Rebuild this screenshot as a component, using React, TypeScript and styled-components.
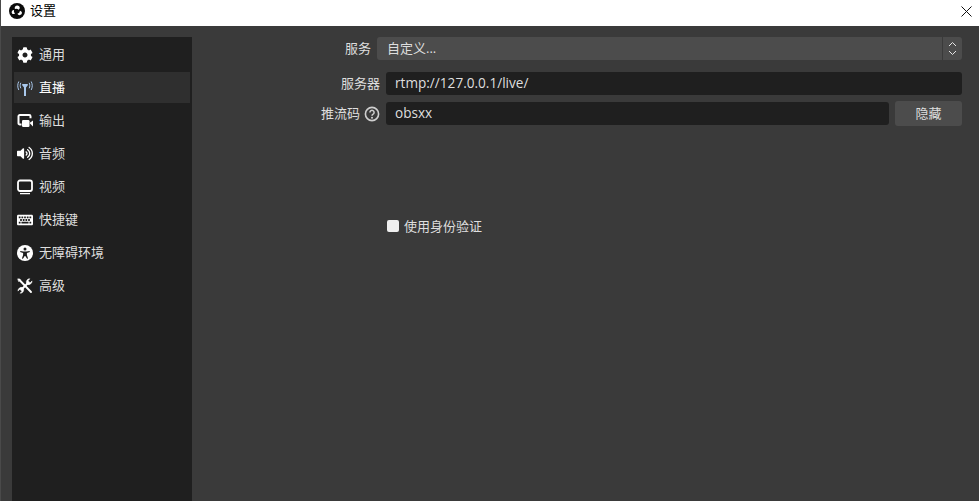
import React from 'react';
import styled, { createGlobalStyle } from 'styled-components';
import { FaCog, FaVolumeUp, FaKeyboard } from 'react-icons/fa';

const GlobalStyle = createGlobalStyle`
  html, body {
    margin: 0;
    padding: 0;
    background: #3a3a3a;
  }
  * {
    box-sizing: border-box;
  }
`;

const ObsLogo = () => (
  <svg width="16" height="16" viewBox="0 0 16 16">
    <circle cx="8" cy="8" r="8" fill="#0b0b0b" />
    <path d="M8.4 2.4a2.4 2.4 0 0 1 1.3 4.4A3.6 3.6 0 0 0 5.9 6 2.6 2.6 0 0 1 8.4 2.4z" fill="#fff" />
    <path d="M13 9.8a2.4 2.4 0 0 1-4.6.9 3.6 3.6 0 0 0 2.6-3 2.6 2.6 0 0 1 2 2.1z" fill="#fff" />
    <path d="M3.2 10.8a2.4 2.4 0 0 1 1.8-3.9 3.6 3.6 0 0 0 1 3.6 2.6 2.6 0 0 1-2.8.3z" fill="#fff" />
  </svg>
);

const StreamIcon = () => (
  <svg width="16" height="16" viewBox="0 0 16 16" fill="none" stroke="#a9c8ec">
    <path d="M5.2 4h5.600v1.200L9 7.600V16H7V7.600L5.200 5.200z" fill="#a9c8ec" stroke="none" />
    <path d="M3.800 2.800c-.8 1.800-.8 3.700 0 5.500M12.200 2.800c.8 1.800.8 3.700 0 5.500" strokeWidth="1" />
    <path d="M1.800 1.500c-1.400 2.800-1.400 5.700 0 8.500M14.200 1.500c1.400 2.800 1.400 5.700 0 8.500" strokeWidth="1" />
  </svg>
);

const OutputIcon = () => (
  <svg width="16" height="16" viewBox="0 0 16 16" fill="none">
    <path d="M4.500 11.500H2.800A1.300 1.300 0 0 1 1.500 10.200V3.300A1.300 1.300 0 0 1 2.800 2h9.400a1.300 1.300 0 0 1 1.300 1.300v2" stroke="#fff" strokeWidth="2" />
    <rect x="5" y="7" width="7.500" height="7" rx="1.200" fill="#fff" />
    <path d="M12.500 10l3.500-2.500v6z" fill="#fff" />
  </svg>
);

const MonitorIcon = () => (
  <svg width="16" height="16" viewBox="0 0 16 16" fill="none">
    <rect x="1" y="1.500" width="14" height="10.500" rx="2" stroke="#fff" strokeWidth="1.800" />
    <path d="M3 14.600h10" stroke="#fff" strokeWidth="1.300" />
  </svg>
);

const AccessIcon = () => (
  <svg width="16" height="16" viewBox="0 0 16 16">
    <circle cx="8" cy="8" r="8" fill="#fff" />
    <circle cx="8" cy="3.900" r="1.500" fill="#1f1f1f" />
    <path d="M3.400 6l3.100.6h3l3.100-.6.3 1-3 .9v2.200l1.200 3.400-1 .3L8.300 11h-.6l-1.800 2.800-1-.3 1.200-3.400V7.900l-3-.9z" fill="#1f1f1f" />
  </svg>
);

const ToolsIcon = () => (
  <svg width="16" height="16" viewBox="0 0 16 16" fill="none" stroke="#fff" strokeLinecap="round">
    <path d="M5.500 10.500L11 5" strokeWidth="2" />
    <path d="M15 3.300a3.300 3.300 0 0 1-4.500 3.100L9.600 5.400A3.300 3.300 0 0 1 12.800.8l-1.700 1.900 1.900 2z" fill="#fff" strokeWidth=".6" />
    <path d="M1 12.700a3.300 3.300 0 0 1 4.500-3.100l.9 1A3.300 3.300 0 0 1 3.200 15.200l1.700-1.900-1.900-2z" fill="#fff" strokeWidth=".6" />
    <path d="M2 1.500L14 14" strokeWidth="1.900" />
    <path d="M1 1l2.500.8L2 3.500z" fill="#fff" strokeWidth=".6" />
  </svg>
);

const HelpIcon = () => (
  <svg width="16" height="16" viewBox="0 0 16 16" fill="none">
    <circle cx="8" cy="8" r="6.600" stroke="#cfcfcf" strokeWidth="1.600" />
    <path d="M5.900 6.400a2.100 2.100 0 1 1 3.200 1.800c-.7.4-1.100.8-1.100 1.600" stroke="#cfcfcf" strokeWidth="1.500" />
    <circle cx="8" cy="11.700" r="1" fill="#cfcfcf" />
  </svg>
);

const ChevronsIcon = () => (
  <svg width="9" height="15" viewBox="0 0 9 15" fill="none" stroke="#e4e4e4" strokeWidth="1">
    <path d="M1 5l3.500-3.500L8 5M1 10l3.500 3.500L8 10" />
  </svg>
);

const CloseIcon = () => (
  <svg width="11" height="11" viewBox="0 0 11 11" stroke="#111" strokeWidth="1" fill="none">
    <path d="M.5.500l10 10M10.500.500l-10 10" />
  </svg>
);

const navItems = [
  { label: '通用', icon: <FaCog size={16} /> },
  { label: '直播', icon: <StreamIcon />, active: true },
  { label: '输出', icon: <OutputIcon /> },
  { label: '音频', icon: <FaVolumeUp size={17} /> },
  { label: '视频', icon: <MonitorIcon /> },
  { label: '快捷键', icon: <FaKeyboard size={18} /> },
  { label: '无障碍环境', icon: <AccessIcon /> },
  { label: '高级', icon: <ToolsIcon /> },
];

const App = () => {
  return (
    <Window>
      <GlobalStyle />
      <TitleBar>
        <TitleLeft>
          <ObsLogo />
          <RaisedText>设置</RaisedText>
        </TitleLeft>
        <CloseButton>
          <CloseIcon />
        </CloseButton>
      </TitleBar>
      <Body>
        <Sidebar>
          {navItems.map((item) => (
            <NavItem key={item.label} $active={item.active}>
              <NavIcon>{item.icon}</NavIcon>
              <RaisedText>{item.label}</RaisedText>
            </NavItem>
          ))}
        </Sidebar>
        <Content>
          <Row $height={23} $mb={12}>
            <Label $width={173}>
              <RaisedText>服务</RaisedText>
            </Label>
            <Combo>
              <ComboText>自定义...</ComboText>
              <ComboArrows>
                <ChevronsIcon />
              </ComboArrows>
            </Combo>
          </Row>
          <Row $height={23} $mb={6}>
            <Label $width={182}>
              <RaisedText>服务器</RaisedText>
            </Label>
            <Input>rtmp://127.0.0.1/live/</Input>
          </Row>
          <Row $height={25}>
            <Label $width={182}>
              <RaisedText>推流码</RaisedText>
              <HelpIcon />
            </Label>
            <Input>obsxx</Input>
            <HideButton>隐藏</HideButton>
          </Row>
          <CheckRow>
            <CheckBox />
            <span>使用身份验证</span>
          </CheckRow>
        </Content>
      </Body>
    </Window>
  );
};

const Window = styled.div`
  width: 979px;
  height: 501px;
  display: flex;
  flex-direction: column;
  overflow: hidden;
  border-left: 1px solid #4a4a4a;
  background: #3a3a3a;
  font-family: 'Open Sans', 'Noto Sans CJK SC', sans-serif;
  font-size: 13px;
  line-height: 16px;
  color: #dedede;
`;

const RaisedText = styled.span`
  padding-bottom: 2px;
`;

const TitleBar = styled.div`
  height: 26px;
  flex: none;
  padding-bottom: 4px;
  display: flex;
  align-items: center;
  justify-content: space-between;
  background: #fff;
  color: #000;
`;

const TitleLeft = styled.div`
  display: flex;
  align-items: center;
  gap: 5px;
  padding-left: 8px;
`;

const CloseButton = styled.div`
  display: flex;
  padding-right: 7px;
`;

const Body = styled.div`
  flex: 1;
  display: flex;
  padding: 11px 17px 0 11px;
  gap: 6px;
`;

const Sidebar = styled.div`
  width: 180px;
  flex: none;
  padding: 2px;
  display: flex;
  flex-direction: column;
  gap: 2px;
  background: #1f1f1f;
`;

const NavItem = styled.div<{ $active?: boolean }>`
  height: 31px;
  padding-left: 3px;
  display: flex;
  align-items: center;
  gap: 6px;
  background: ${(props) => (props.$active ? '#2f2f2f' : 'transparent')};
  color: ${(props) => (props.$active ? '#ffffff' : '#dedede')};
`;

const NavIcon = styled.span`
  width: 16px;
  height: 16px;
  display: flex;
  align-items: center;
  justify-content: center;
  color: #fff;
`;

const Content = styled.div`
  flex: 1;
  display: flex;
  flex-direction: column;
`;

const Row = styled.div<{ $height: number; $mb?: number }>`
  height: ${(props) => props.$height}px;
  margin-bottom: ${(props) => props.$mb ?? 0}px;
  display: flex;
  align-items: center;
  gap: 6px;
`;

const Label = styled.div<{ $width: number }>`
  width: ${(props) => props.$width}px;
  flex: none;
  display: flex;
  align-items: center;
  justify-content: flex-end;
  gap: 4px;
`;

const Combo = styled.div`
  flex: 1;
  height: 23px;
  display: flex;
  align-items: center;
  justify-content: space-between;
  border-radius: 3px;
  background: #4c4c4c;
`;

const ComboText = styled.span`
  padding: 0 0 2px 10px;
`;

const ComboArrows = styled.div`
  width: 20px;
  height: 100%;
  display: flex;
  align-items: center;
  justify-content: center;
  border-left: 1px solid #3a3a3a;
`;

const Input = styled.div`
  flex: 1;
  height: 23px;
  padding: 0 0 2px 9px;
  display: flex;
  align-items: center;
  border-radius: 3px;
  font-size: 13.6px;
  background: #1f1f1f;
`;

const HideButton = styled.div`
  width: 67px;
  height: 25px;
  flex: none;
  padding-bottom: 2px;
  display: flex;
  align-items: center;
  justify-content: center;
  border-radius: 3px;
  background: #4c4c4c;
`;

const CheckRow = styled.div`
  margin: 92px 0 0 189px;
  display: flex;
  align-items: center;
  gap: 5px;
`;

const CheckBox = styled.span`
  width: 12px;
  height: 12px;
  border-radius: 2px;
  background: #efefef;
`;

export default App;
